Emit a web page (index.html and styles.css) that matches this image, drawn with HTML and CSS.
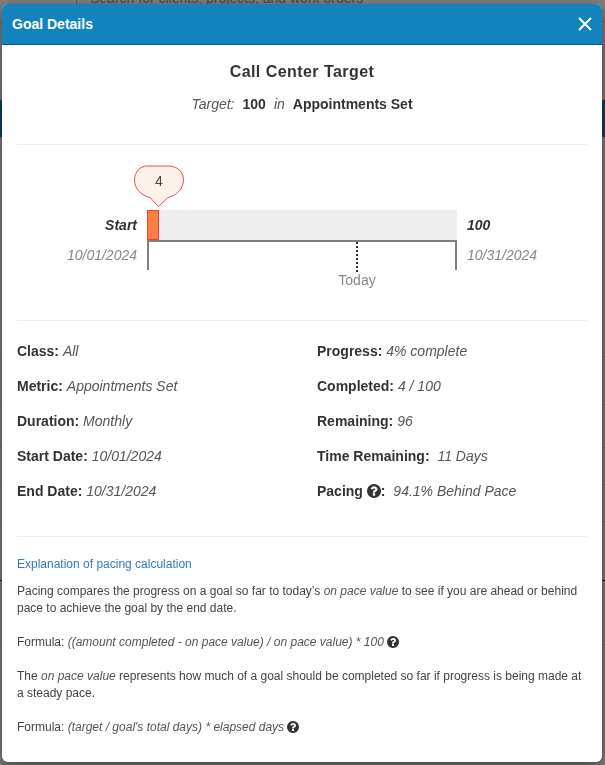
FILE: index.html
```html
<!DOCTYPE html>
<html lang="en">
<head>
<meta charset="utf-8">
<title>Goal Details</title>
<link rel="stylesheet" href="styles.css">
</head>
<body>
<svg class="defs" width="0" height="0" aria-hidden="true">
  <symbol id="q" viewBox="128 128 1536 1536"><path d="M1024 1376v-192q0-14-9-23t-23-9h-192q-14 0-23 9t-9 23v192q0 14 9 23t23 9h192q14 0 23-9t9-23zm256-672q0-88-55.5-163t-138.5-116-170-41q-243 0-371 213-15 24 8 42l132 100q7 6 19 6 16 0 25-12 53-68 86-92 34-24 86-24 48 0 85.5 26t37.5 59q0 38-20 61t-68 45q-63 28-115.5 86.5t-52.5 125.5v36q0 14 9 23t23 9h192q14 0 23-9t9-23q0-19 21.5-49.5t54.5-49.5q32-18 49-28.5t46-35 44.5-48 28-60.5 12.5-81zm384 192q0 209-103 385.5t-279.5 279.5-385.5 103-385.5-103-279.5-279.5-103-385.5 103-385.5 279.5-279.5 385.5-103 385.5 103 279.5 279.5 103 385.5z"/></symbol>
</svg>

<div class="backdrop" aria-hidden="true">
  <div class="bg-search"><span>Search for clients, projects, and work orders</span></div>
  <div class="bg-row bg-h1"></div>
  <div class="bg-band"></div>
  <div class="bg-row bg-h2"></div>
  <div class="bg-row bg-h3"></div>
  <div class="bg-row bg-h4a"></div>
  <div class="bg-row bg-h4"></div>
  <div class="bg-row bg-h4"></div>
  <div class="bg-row bg-h5"></div>
  <div class="bg-row bg-h6"></div>
</div>

<div class="modal">
  <header class="modal-head">
    <h4>Goal Details</h4>
    <svg class="close" viewBox="0 0 14 14"><path d="M1 1l12 12M13 1L1 13"/></svg>
  </header>
  <div class="modal-body">
    <section class="summary">
      <h3>Call Center Target</h3>
      <p class="target"><em>Target:</em><b>100</b><em>in</em><b>Appointments Set</b></p>
    </section>

    <section class="chart">
      <div class="chart-left">
        <div class="lbl-strong">Start</div>
        <div class="lbl-date">10/01/2024</div>
      </div>
      <div class="chart-mid">
        <div class="track"><div class="fill"></div></div>
        <div class="axis"><div class="today-line"></div></div>
        <div class="today">Today</div>
        <div class="bubble">
          <svg viewBox="0 0 52 44" width="52" height="44"><path d="M14 1H36C45 1 50.500 8 50.500 14.500C50.500 24 43 31 35 32.500L25.500 41.500L17 32.500C9 31 1.500 24 1.500 15C1.500 7 7 1 14 1Z"/></svg>
          <span>4</span>
        </div>
      </div>
      <div class="chart-right">
        <div class="lbl-strong">100</div>
        <div class="lbl-date">10/31/2024</div>
      </div>
    </section>

    <section class="facts">
      <div class="fact"><b>Class:</b> <i>All</i></div>
      <div class="fact"><b>Progress:</b> <i>4% complete</i></div>
      <div class="fact"><b>Metric:</b> <i>Appointments Set</i></div>
      <div class="fact"><b>Completed:</b> <i>4 / 100</i></div>
      <div class="fact"><b>Duration:</b> <i>Monthly</i></div>
      <div class="fact"><b>Remaining:</b> <i>96</i></div>
      <div class="fact"><b>Start Date:</b> <i>10/01/2024</i></div>
      <div class="fact"><b>Time Remaining:</b> <i class="wide">11 Days</i></div>
      <div class="fact"><b>End Date:</b> <i>10/31/2024</i></div>
      <div class="fact"><b>Pacing <svg class="qi"><use href="#q"/></svg>:</b> <i class="wide">94.1% Behind Pace</i></div>
    </section>

    <section class="explain">
      <a class="explain-link">Explanation of pacing calculation</a>
      <p>Pacing compares the progress on a goal so far to today’s <i>on pace value</i> to see if you are ahead or behind pace to achieve the goal by the end date.</p>
      <p>Formula: <i>((amount completed - on pace value) / on pace value) * 100</i> <svg class="qi small"><use href="#q"/></svg></p>
      <p>The <i>on pace value</i> represents how much of a goal should be completed so far if progress is being made at a steady pace.</p>
      <p>Formula: <i>(target / goal's total days) * elapsed days</i> <svg class="qi small"><use href="#q"/></svg></p>
    </section>
  </div>
</div>
</body>
</html>
```
FILE: styles.css
```css
* { box-sizing: border-box; }
html, body { height: 100%; }
body {
  margin: 0;
  overflow: hidden;
  background: #808080;
  color: #333;
  font-family: "Liberation Sans", Arial, sans-serif;
  font-size: 14px;
}
.defs { position: absolute; }

/* dimmed page behind the dialog */
.backdrop { position: fixed; inset: 0; overflow: hidden; background: #808080; }
.bg-search { display: flow-root; height: 22px; border-bottom: 1px solid #707070; padding-left: 76px; }
.bg-search span {
  display: block;
  margin-top: -10px;
  padding-left: 13px;
  border-left: 1px solid #5c5c5c;
  font-size: 14px;
  line-height: 16px;
  color: #4a4a4a;
}
.bg-row { border-bottom: 1px solid #707070; }
.bg-h1 { height: 78px; }
.bg-band { height: 37px; background: #0c4560; }
.bg-h2 { height: 220px; }
.bg-h3 { height: 48px; }
.bg-h4a { height: 43px; }
.bg-h4 { height: 37px; }
.bg-h5 { height: 59px; border-bottom-color: #111; }
.bg-h6 { height: 64px; }

/* dialog */
.modal {
  position: absolute;
  left: 2px;
  top: 4px;
  width: 600px;
  height: 758px;
  background: #fff;
  border-radius: 6px;
  overflow: hidden;
  box-shadow: 0 5px 15px rgba(0, 0, 0, .5);
}
.modal-head {
  display: flex;
  align-items: center;
  justify-content: space-between;
  height: 41px;
  padding: 0 10px;
  background: #1283bd;
  border-bottom: 1px solid #0c5a80;
}
.modal-head h4 { margin: 0; color: #fff; font-size: 14px; line-height: 40px; font-weight: 700; }
.close { width: 14px; height: 14px; }
.close path { fill: none; stroke: #fff; stroke-width: 2; }
.modal-body { padding: 0 15px; }

.summary { height: 100px; border-bottom: 1px solid #eee; text-align: center; padding-top: 18px; }
.summary h3 { margin: 0; font-size: 16px; line-height: 18px; font-weight: 700; letter-spacing: .45px; }
.target { margin: 13px 0 0; line-height: 20px; font-size: 14px; display: flex; justify-content: center; gap: 8px; }
.target em { color: #555; }

.chart { display: flex; height: 176px; border-bottom: 1px solid #eee; padding-top: 65px; }
.chart-left { width: 120px; text-align: right; }
.chart-right { padding-left: 10px; }
.lbl-strong { font-weight: 700; font-style: italic; line-height: 30px; font-size: 14px; }
.lbl-date { font-style: italic; color: #888; font-size: 14px; line-height: 30px; }
.chart-mid { position: relative; width: 310px; margin-left: 10px; }
.track { height: 30px; background: #eee; }
.fill { width: 12px; height: 30px; background: #ff7f41; border: 1px solid #ee3f3f; }
.axis { position: relative; height: 30px; border: 2px solid #808080; border-bottom: 0; }
.today-line { position: absolute; left: 207px; top: 0; height: 30px; border-left: 2px dotted #333; }
.today { width: 202px; margin-left: 108px; margin-top: 1px; text-align: center; color: #888; font-size: 14px; line-height: 18px; padding-left: 2px; }
.bubble { position: absolute; left: -14px; top: -45px; width: 52px; height: 44px; }
.bubble svg { display: block; }
.bubble path { fill: #fdf1ec; stroke: #ee4b4b; stroke-width: 1; }
.bubble span { position: absolute; left: 0; right: 0; top: 6px; text-align: center; font-size: 14px; line-height: 20px; color: #444; }

.facts {
  display: grid;
  grid-template-columns: 300px 1fr;
  grid-auto-rows: 35px;
  height: 216px;
  padding-top: 13px;
  border-bottom: 1px solid #eee;
  line-height: 35px;
}
.fact i { color: #555; }
.fact i.wide { margin-left: 4px; }
.qi { width: 14px; height: 14px; vertical-align: -2px; fill: #333; }
.qi.small { width: 12px; height: 12px; }

.explain { padding-top: 19px; font-size: 12px; line-height: 17px; color: #444; }
.explain-link { display: block; color: #337ab7; margin-bottom: 10px; }
.explain p { margin: 0 0 17px; }
.explain i { color: #555; }
```
